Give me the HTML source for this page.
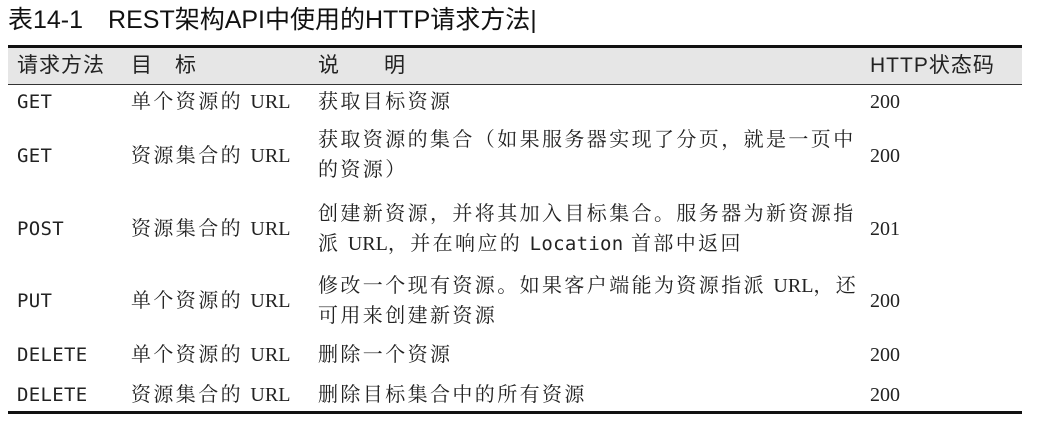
<!DOCTYPE html>
<html><head><meta charset="utf-8"><style>
body{margin:0;width:1042px;height:432px;background:#fff;position:relative;overflow:hidden;color:#222;font-family:"Liberation Serif","Noto Serif CJK SC",serif;}
.a{position:absolute;white-space:nowrap;font-size:20px;line-height:30px;letter-spacing:2.4px;}
.a.h{font-size:21px;letter-spacing:1px}
.m{font-family:"DejaVu Sans Mono","Liberation Mono",monospace;font-size:19px;letter-spacing:0.3px;}
.s{font-family:"Liberation Sans","Noto Sans CJK SC",sans-serif;}
.u{letter-spacing:0}
</style></head><body>
<div class="a s" style="left:8px;top:4px;font-size:25px;line-height:32px;letter-spacing:0;color:#111">表14-1　REST架构API中使用的HTTP请求方法|</div>
<div style="position:absolute;left:8px;top:45px;width:1014px;height:3px;background:#111"></div>
<div style="position:absolute;left:8px;top:48px;width:1014px;height:36px;background:#e6e6e6;border-bottom:1.5px solid #333"></div>
<div class="a s h" style="left:17px;top:51px">请求方法</div>
<div class="a s h" style="left:131px;top:51px">目　标</div>
<div class="a s h" style="left:318px;top:51px">说　　明</div>
<div class="a s h" style="left:870px;top:51px">HTTP状态码</div>

<div class="a m" style="left:17px;top:87px">GET</div>
<div class="a" style="left:131px;top:87px">单个资源的 <span class="u">URL</span></div>
<div class="a" style="left:318px;top:87px">获取目标资源</div>
<div class="a u" style="left:870px;top:87px">200</div>

<div class="a m" style="left:17px;top:141px">GET</div>
<div class="a" style="left:131px;top:141px">资源集合的 <span class="u">URL</span></div>
<div class="a" style="left:318px;top:125px">获取资源的集合（如果服务器实现了分页，就是一页中<br>的资源）</div>
<div class="a u" style="left:870px;top:141px">200</div>

<div class="a m" style="left:17px;top:214px">POST</div>
<div class="a" style="left:131px;top:214px">资源集合的 <span class="u">URL</span></div>
<div class="a" style="left:318px;top:199px">创建新资源，并将其加入目标集合。服务器为新资源指<br>派 <span class="u">URL</span>，并在响应的 <span class="m">Location</span> 首部中返回</div>
<div class="a u" style="left:870px;top:214px">201</div>

<div class="a m" style="left:17px;top:286px">PUT</div>
<div class="a" style="left:131px;top:286px">单个资源的 <span class="u">URL</span></div>
<div class="a" style="left:318px;top:271px">修改一个现有资源。如果客户端能为资源指派 <span class="u">URL</span>，还<br>可用来创建新资源</div>
<div class="a u" style="left:870px;top:286px">200</div>

<div class="a m" style="left:17px;top:340px">DELETE</div>
<div class="a" style="left:131px;top:340px">单个资源的 <span class="u">URL</span></div>
<div class="a" style="left:318px;top:340px">删除一个资源</div>
<div class="a u" style="left:870px;top:340px">200</div>

<div class="a m" style="left:17px;top:380px">DELETE</div>
<div class="a" style="left:131px;top:380px">资源集合的 <span class="u">URL</span></div>
<div class="a" style="left:318px;top:380px">删除目标集合中的所有资源</div>
<div class="a u" style="left:870px;top:380px">200</div>

<div style="position:absolute;left:8px;top:411px;width:1014px;height:3px;background:#111"></div>
</body></html>
